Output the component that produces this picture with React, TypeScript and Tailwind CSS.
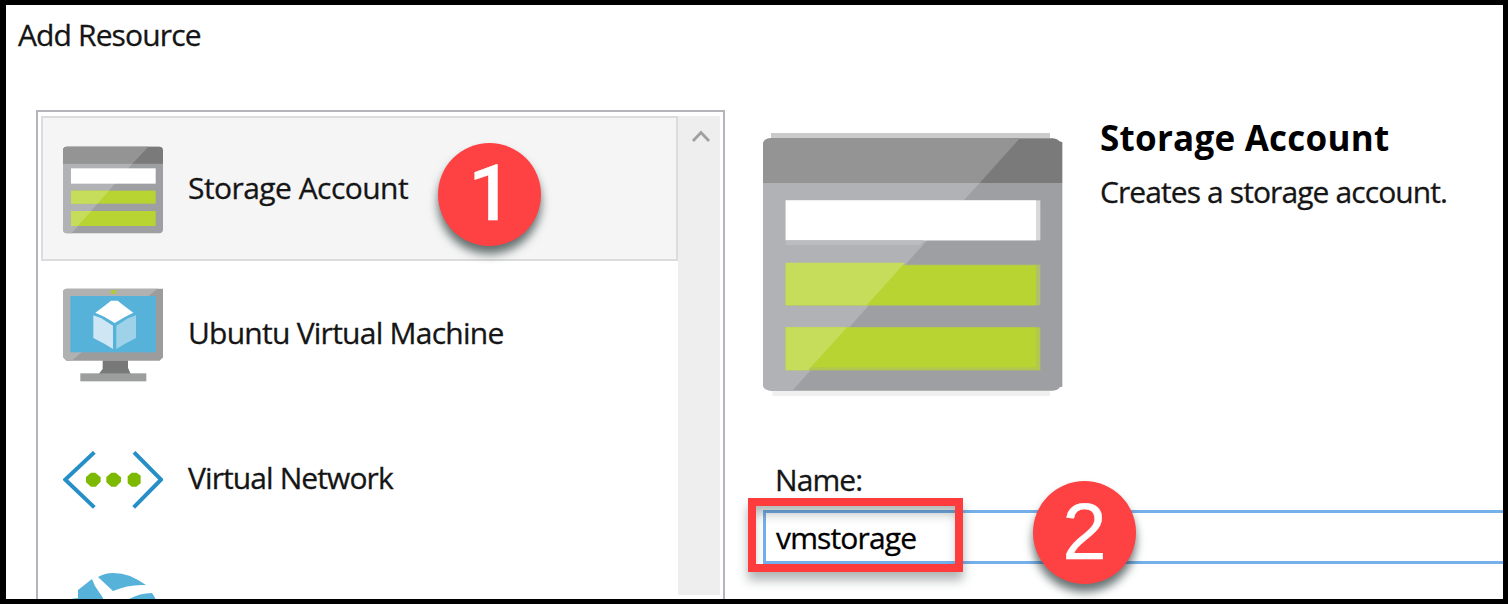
import type { ReactNode } from "react";

function StorageIcon() {
  return (
    <svg className="block h-[88px] w-[100px]" viewBox="0 0 300 264">
      <rect x="0" y="2" width="300" height="260" rx="12" fill="#9e9fa2" />
      <path d="M0 53V14Q0 2 12 2H288Q300 2 300 14V53Z" fill="#7a7a7a" />
      <path d="M0 53V14Q0 2 12 2H256L208 53Z" fill="#949494" />
      <path d="M0 53H208L26 262H12Q0 262 0 250Z" fill="#b1b2b5" />
      <rect x="24" y="67" width="254" height="46" fill="#fff" />
      <rect x="24" y="134" width="254" height="39" fill="#b8d432" />
      <rect x="24" y="195" width="254" height="45" fill="#b8d432" />
      <path d="M24 134H138L103 173H24Z" fill="#c6dd5c" />
      <path d="M24 195H85L44 240H24Z" fill="#c6dd5c" />
    </svg>
  );
}

function LargeStorageIcon() {
  return (
    <svg className="block h-[263px] w-[300px]" viewBox="0 0 900 789">
      <path d="M24 0H861V16H24Z" fill="#cbcbcb" />
      <path d="M28 770H861V789H28Z" fill="#f0f0f0" />
      <path d="M0 150V36Q0 16 24 16H870Q884 18 888 24L898 28V150Z" fill="#7a7a7a" />
      <path d="M0 150V36Q0 16 24 16H770L650 150Z" fill="#949494" />
      <path d="M0 150H898V761L890 763Q884 773 870 773H24Q0 770 0 755Z" fill="#9e9fa2" />
      <path d="M0 150H650L480 336L88 773H24Q0 770 0 755Z" fill="#b1b2b5" />
      <rect x="68" y="202" width="764" height="120" fill="#d8d9da" />
      <rect x="68" y="202" width="751" height="120" fill="#fff" />
      <path d="M68 322H482L471 336H68Z" fill="#bbbcbd" />
      <rect x="68" y="395" width="764" height="122" fill="#afbf6b" />
      <rect x="68" y="397" width="751" height="120" fill="#b8d432" />
      <path d="M68 389H426L311 517H68Z" fill="#c6dd5c" />
      <rect x="68" y="583" width="764" height="129" fill="#b1c74f" />
      <rect x="68" y="583" width="751" height="120" fill="#b8d432" />
      <path d="M68 583H253L135 712H68Z" fill="#c6dd5c" />
    </svg>
  );
}

function MonitorIcon() {
  return (
    <svg className="block h-[94px] w-[100px]" viewBox="69 53 300 282">
      <path d="M188 270H264V292L272 311H176L188 296Z" fill="#787878" />
      <rect x="121" y="309" width="198" height="24" fill="#9c9d9d" />
      <path d="M69 66Q69 55 81 55H369V261L359 271H79L69 260Z" fill="#9c9c9c" />
      <path d="M69 66Q69 55 81 55H352L95 271H79L69 260Z" fill="#b1b1b1" />
      <rect x="91" y="77" width="257" height="169" fill="#57b2da" />
      <rect x="213" y="59" width="16" height="11" fill="#b5ca36" />
      <path d="M213 91H233L250 105L280 127L256 139L224 158L194 140L166 127L197 104Z" fill="#fff" />
      <path d="M160 135L184 144L219 166V236L193 220L160 203Z" fill="#cfe7f4" />
      <path d="M288 135L264 144L229 166V236L255 220L288 203Z" fill="#9ed2e9" />
    </svg>
  );
}

function NetworkIcon() {
  return (
    <svg className="block h-[58px] w-[100px]" viewBox="69 541 300 174">
      <g fill="none" stroke="#278fc8" strokeWidth="12">
        <path d="M163 545L76 627L163 710" />
        <path d="M282 545L363 627L281 710" />
      </g>
      <g fill="#7db900">
        <path d="M153 606H166L182 620V633L167 648H153L138 635V619Z" />
        <path d="M214 606H227L243 620V633L228 648H214L199 635V619Z" />
        <path d="M275 606H290L302 615V638L289 648H275L263 638V617Z" />
      </g>
    </svg>
  );
}

function GlobeIcon() {
  return (
    <svg className="mb-1 block h-[100px] w-[100px]" viewBox="0 0 100 100" fill="#57b2da">
      <path d="M15 17L29 6L32 13L40 25L43 48H2Q3 35 8 26L15 25Z" />
      <path d="M35 4Q42 0 50 0Q59 0 67 3Q76 7 83 12Q66 11 50 18Z" />
      <path d="M66 26Q77 20 89 20Q98 33 98 48H60Z" />
    </svg>
  );
}

function ListItem({ icon, label, selected }: { icon: ReactNode; label: ReactNode; selected?: boolean }) {
  return (
    <li
      className={
        "flex h-[145px] shrink-0 items-center border-2 pl-5 pt-[2px] " +
        (selected ? "border-[#dcdcdc] bg-[#f5f5f5]" : "border-transparent")
      }
    >
      {icon}
      <span className="mb-1 ml-[25px] whitespace-nowrap">{label}</span>
    </li>
  );
}

function Badge({ value, place }: { value: string; place: string }) {
  return (
    <div
      className={
        "absolute flex h-[103px] w-[103px] items-center justify-center rounded-full bg-[#fe4142] leading-none text-white shadow-[0_8px_10px_rgba(25,40,40,0.65)] " +
        place
      }
    >
      {value}
    </div>
  );
}

export default function App() {
  return (
    <main className="relative flex h-[604px] w-[1508px] flex-col overflow-hidden border-[5px] border-l-[6px] border-black bg-white font-['Open_Sans','Noto_Sans',sans-serif] text-[30px] leading-[40px] text-[#151515] [-webkit-text-stroke:0.3px]">
      <h1 className="h-[105px] shrink-0 pl-3 pt-[10px] tracking-[-0.87px]">Add Resource</h1>

      <div className="flex min-h-0 flex-1">
        <section className="ml-[30px] flex w-[689px] shrink-0 border-2 border-b-0 border-[#b4b4bc] pl-[3px] pr-[3px] pt-1">
          <ul className="flex w-[637px] shrink-0 flex-col overflow-hidden">
            <ListItem selected icon={<StorageIcon />} label={<span className="tracking-[-0.55px]">Storage Account</span>} />
            <ListItem icon={<MonitorIcon />} label={<span className="tracking-[-0.75px]">Ubuntu Virtual Machine</span>} />
            <ListItem icon={<NetworkIcon />} label={<span className="tracking-[-0.9px]">Virtual Network</span>} />
            <ListItem icon={<GlobeIcon />} label="" />
          </ul>
          <div className="mb-1 flex flex-1 justify-center bg-[#eeeeee] pl-[3px] pt-[13px]">
            <svg className="h-4 w-[22px]" viewBox="0 0 22 16" fill="none" stroke="#a0a0a0" strokeWidth="2.8">
              <path d="M3 12L11 3.5L19 12" />
            </svg>
          </div>
        </section>

        <section className="ml-[38px] flex min-w-0 flex-1 flex-col">
          <div className="flex h-[350px] shrink-0 pt-[23px]">
            <LargeStorageIcon />
            <div className="-mt-4 ml-[37px] whitespace-nowrap">
              <h2 className="text-[35px] font-bold leading-[42px] tracking-[0.25px] text-black [-webkit-text-stroke:0px]">Storage Account</h2>
              <p className="mt-[13px] tracking-[-0.9px]">Creates a storage account.</p>
            </div>
          </div>
          <label className="flex h-[50px] shrink-0 pl-[12px] tracking-[-0.9px]">Name:</label>
          <div className="flex h-[54px] shrink-0 items-center border-[3px] border-r-0 border-[#75b0eb] pl-[10px] pt-[2px] tracking-[-0.85px] text-black">
            vmstorage
          </div>
        </section>
      </div>

      <div className="absolute left-[742px] top-[493px] h-[74px] w-[215px] border-[8px] border-[#fe3c3e] shadow-[0_8px_10px_rgba(25,40,40,0.35),inset_0_10px_12px_-3px_rgba(25,40,40,0.35)]" />
      <Badge
        value="1"
        place="left-[432px] top-[138px] pb-[2px] pl-[2px] font-[Roboto,'Liberation_Sans',sans-serif] text-[78px] font-medium"
      />
      <Badge value="2" place="left-[1027px] top-[476px] pb-[2px] font-['Liberation_Sans',sans-serif] text-[80px]" />
    </main>
  );
}
